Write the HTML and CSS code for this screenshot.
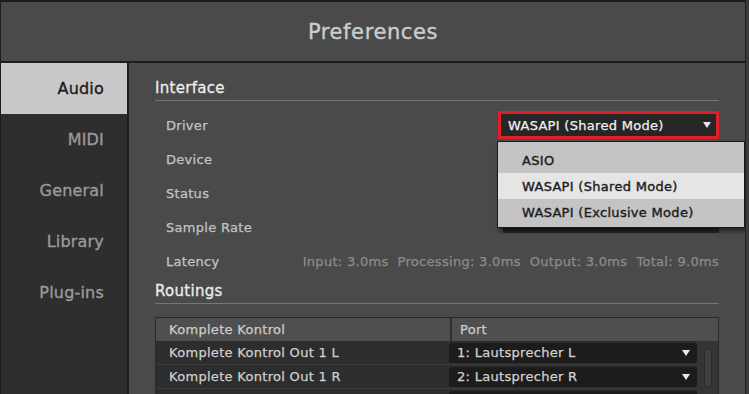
FILE: index.html
```html
<!DOCTYPE html>
<html lang="en">
<head>
<meta charset="utf-8">
<title>Preferences</title>
<link rel="stylesheet" href="styles.css">
</head>
<body>
<div class="window">
  <header class="titlebar">Preferences</header>
  <div class="main">
    <nav class="sidebar">
      <div class="nav-item active">Audio</div>
      <div class="nav-item">MIDI</div>
      <div class="nav-item">General</div>
      <div class="nav-item">Library</div>
      <div class="nav-item">Plug-ins</div>
    </nav>
    <section class="content">
      <h2 class="section-title">Interface</h2>
      <div class="rows">
        <div class="row">
          <span class="label">Driver</span>
          <div class="select driver-select"><span class="select-text">WASAPI (Shared Mode)</span><span class="arrow"></span></div>
        </div>
        <div class="row"><span class="label">Device</span></div>
        <div class="row"><span class="label">Status</span></div>
        <div class="row">
          <span class="label">Sample Rate</span>
          <div class="select rate-select"></div>
        </div>
        <div class="row">
          <span class="label">Latency</span>
          <div class="latency">
            <span>Input: 3.0ms</span>
            <span>Processing: 3.0ms</span>
            <span>Output: 3.0ms</span>
            <span>Total: 9.0ms</span>
          </div>
        </div>
      </div>
      <h2 class="section-title routings">Routings</h2>
      <div class="table">
        <div class="thead">
          <div class="th th-name">Komplete Kontrol</div>
          <div class="th th-port">Port</div>
        </div>
        <div class="tbody">
          <div class="trows">
            <div class="tr">
              <span class="td-name">Komplete Kontrol Out 1 L</span>
              <div class="port-select"><span>1: Lautsprecher L</span><span class="arrow"></span></div>
            </div>
            <div class="tr">
              <span class="td-name">Komplete Kontrol Out 1 R</span>
              <div class="port-select"><span>2: Lautsprecher R</span><span class="arrow"></span></div>
            </div>
            <div class="tr">
              <span class="td-name"></span>
              <div class="port-select"></div>
            </div>
          </div>
          <div class="scroll-track"><div class="scroll-thumb"></div></div>
        </div>
      </div>
      <div class="popup">
        <div class="popup-item">ASIO</div>
        <div class="popup-item selected">WASAPI (Shared Mode)</div>
        <div class="popup-item">WASAPI (Exclusive Mode)</div>
      </div>
    </section>
  </div>
</div>
</body>
</html>
```
FILE: styles.css
```css
* { box-sizing: border-box; }

html, body {
  margin: 0;
  padding: 0;
}

body {
  width: 749px;
  height: 394px;
  overflow: hidden;
  background: #3b3b3b;
  font-family: "DejaVu Sans", "Liberation Sans", sans-serif;
  font-size: 13px;
  letter-spacing: 0.3px;
  -webkit-text-stroke: 0.25px currentColor;
}

.window {
  width: 746px;
  height: 394px;
  background: #1d1d1d;
  padding: 2px 1px 0 1px;
  display: flex;
  flex-direction: column;
  gap: 2px;
}

.titlebar {
  height: 59px;
  flex: none;
  background: #4a4a4a;
  color: #cdcdcd;
  font-size: 21px;
  letter-spacing: 0.6px;
  display: flex;
  align-items: center;
  justify-content: center;
  padding-top: 1px;
  -webkit-text-stroke: 0.35px currentColor;
}

.main {
  flex: 1;
  display: flex;
  gap: 2px;
  min-height: 0;
}

.sidebar {
  width: 126px;
  flex: none;
  background: #2e2e2e;
  display: flex;
  flex-direction: column;
}

.nav-item {
  height: 51px;
  display: flex;
  align-items: center;
  justify-content: flex-end;
  padding-right: 23px;
  font-size: 16px;
  letter-spacing: 0.2px;
  color: #9a9a9a;
  -webkit-text-stroke: 0.35px currentColor;
}

.nav-item.active {
  background: #c9c9c9;
  color: #1b1b1b;
}

.content {
  flex: 1;
  position: relative;
  background: #4a4a4a;
  padding: 15px 26px 0 26px;
  overflow: hidden;
}

.section-title {
  margin: 0;
  font-size: 15px;
  font-weight: normal;
  letter-spacing: 0.3px;
  line-height: 20px;
  color: #ececec;
  padding-bottom: 2px;
  border-bottom: 1px solid #767676;
  -webkit-text-stroke: 0.3px currentColor;
}

.section-title.routings {
  margin-top: 3px;
}

.rows {
  margin-top: 7px;
  display: flex;
  flex-direction: column;
}

.row {
  height: 34px;
  display: flex;
  align-items: center;
  justify-content: space-between;
}

.label {
  padding-left: 11px;
  color: #c4c4c4;
}

.select {
  display: flex;
  align-items: center;
  justify-content: space-between;
  background: #262626;
}

.driver-select {
  width: 221px;
  height: 28px;
  border: 3px solid #e01f28;
  padding: 0 5px 0 7px;
  color: #f0f0f0;
}

.rate-select {
  width: 216px;
  height: 22px;
  margin-bottom: 10px;
}

.arrow {
  width: 0;
  height: 0;
  border-left: 4px solid transparent;
  border-right: 4px solid transparent;
  border-top: 6px solid #e8e8e8;
  -webkit-text-stroke: 0;
}

.latency {
  display: flex;
  gap: 9px;
  color: #8c8c8c;
}

.table {
  margin-top: 13px;
  width: 564px;
  border: 1px solid #2a2a2a;
  border-bottom: none;
}

.thead {
  height: 23px;
  display: flex;
  background: #4f4f4f;
  color: #cccccc;
}

.th {
  display: flex;
  align-items: center;
}

.th-name {
  width: 296px;
  padding-left: 13px;
  border-right: 2px solid #2f2f2f;
}

.th-port {
  flex: 1;
  padding-left: 8px;
}

.tbody {
  display: flex;
  background: #353535;
}

.trows {
  width: 541px;
  display: flex;
  flex-direction: column;
}

.tr {
  height: 24px;
  display: flex;
  align-items: center;
  background: #2d2d2d;
  border-bottom: 1px solid #3c3c3c;
}

.td-name {
  width: 293px;
  padding-left: 13px;
  color: #cfcfcf;
}

.port-select {
  width: 248px;
  height: 20px;
  border-radius: 2px;
  background: #1c1c1c;
  color: #d2d2d2;
  display: flex;
  align-items: center;
  justify-content: space-between;
  padding: 0 7px 0 8px;
}

.scroll-track {
  flex: 1;
  padding: 7px 0 0 7px;
}

.scroll-thumb {
  width: 8px;
  height: 39px;
  border-radius: 4px;
  background: #404040;
  border: 1px solid #2b2b2b;
}

.popup {
  position: absolute;
  left: 368px;
  top: 78px;
  width: 248px;
  height: 87px;
  background: #c4c4c4;
  border: 1px solid #1a1a1a;
  padding-top: 5px;
  box-shadow: 2px 3px 4px rgba(0, 0, 0, 0.55);
}

.popup-item {
  height: 26px;
  display: flex;
  align-items: center;
  padding-left: 24px;
  color: #1e1e1e;
  -webkit-text-stroke: 0.4px currentColor;
}

.popup-item.selected {
  background: #e5e5e5;
}
```
